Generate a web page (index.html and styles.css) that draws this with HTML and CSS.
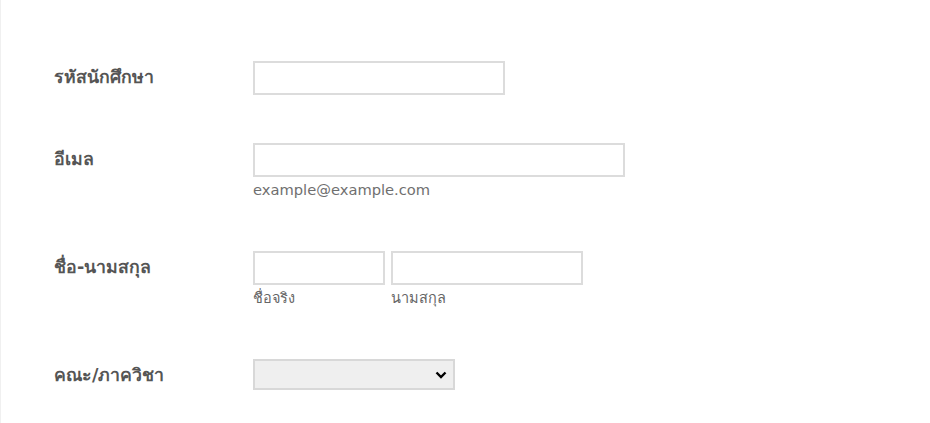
FILE: index.html
```html
<!DOCTYPE html>
<html lang="th">
<head>
<meta charset="utf-8">
<link rel="stylesheet" href="styles.css">
</head>
<body>
<div class="form">
  <div class="row">
    <label class="label">รหัสนักศึกษา</label>
    <div class="field">
      <input class="input w-id" type="text">
    </div>
  </div>
  <div class="row">
    <label class="label">อีเมล</label>
    <div class="field">
      <input class="input w-email" type="text">
      <div class="sub sub-email">example@example.com</div>
    </div>
  </div>
  <div class="row">
    <label class="label">ชื่อ-นามสกุล</label>
    <div class="field names">
      <div class="name">
        <input class="input w-first" type="text">
        <div class="sub">ชื่อจริง</div>
      </div>
      <div class="name">
        <input class="input w-last" type="text">
        <div class="sub">นามสกุล</div>
      </div>
    </div>
  </div>
  <div class="row">
    <label class="label">คณะ/ภาควิชา</label>
    <div class="field">
      <div class="select">
        <svg class="chev" width="12" height="8" viewBox="0 0 12 8"><path d="M1.5 1.5 L6 6 L10.5 1.5" fill="none" stroke="#000" stroke-width="2.4"/></svg>
      </div>
    </div>
  </div>
</div>
</body>
</html>
```
FILE: styles.css
```css
html, body {
  margin: 0;
  padding: 0;
  background: #fff;
}
body {
  font-family: "DejaVu Sans", "Noto Sans", sans-serif;
  height: 423px;
  overflow: hidden;
  border-left: 1px solid #f0f0f0;
}
.form {
  padding: 37px 0 0 53px;
}
.row {
  display: flex;
  padding: 24px 0;
}
.label {
  width: 199px;
  font-weight: bold;
  font-size: 17.7px;
  line-height: 32px;
  color: #555;
}
.field {
  display: flex;
  flex-direction: column;
}
.input {
  box-sizing: border-box;
  height: 34px;
  border: 2px solid #dcdcdc;
  background: #fff;
  margin: 0;
  padding: 0;
  display: block;
}
.w-id { width: 252px; }
.w-email { width: 372px; }
.w-first { width: 132px; }
.w-last { width: 192px; }
.sub {
  font-size: 14.5px;
  color: #666;
  line-height: 26px;
  height: 26px;
}
.sub-email {
  font-size: 14.7px;
  color: #6f6f6f;
}
.names {
  flex-direction: row;
  gap: 6px;
}
.select {
  box-sizing: border-box;
  width: 202px;
  height: 31px;
  border: 2px solid #d8d8d8;
  background: #efefef;
  display: flex;
  align-items: center;
  justify-content: flex-end;
  padding-right: 6px;
}
```
